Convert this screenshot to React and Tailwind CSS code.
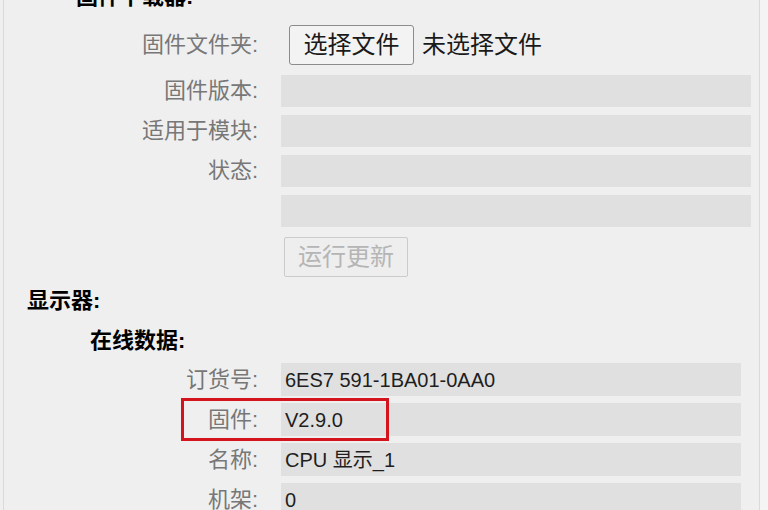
import React from 'react';

const font = { fontFamily: '"Liberation Sans", "Noto Sans CJK SC", sans-serif' };

function Field({ label, children, className = '' }) {
  return (
    <div className={`flex items-center ${className}`}>
      <div className="w-[257px] shrink-0 text-right text-[22px] leading-none text-[#777777]">{label}</div>
      {children}
    </div>
  );
}

function EmptyBox() {
  return <div className="ml-[23px] h-[32px] w-[470px] bg-[#e0e0e0]" />;
}

function ValueBox({ value }) {
  return (
    <div className="ml-[23px] flex h-[33px] w-[460px] items-center bg-[#e0e0e0] pl-[4px] text-[20px] leading-none text-[#1e1e1e]">
      {value}
    </div>
  );
}

export default function App() {
  return (
    <div className="relative h-[510px] w-[768px] overflow-hidden bg-[#efefef]" style={font}>
      <div className="flex h-full">
        <div className="ml-[3px] h-full w-[757px] border-l border-r border-[#dadada]">
          <div className="-ml-[3px]">
            {/* firmware loader */}
            <div className="-mt-[15px] ml-[75px] h-[24px] text-[22px] font-bold leading-[24px] text-black">固件下载器:</div>

            <Field label="固件文件夹:" className="mt-[16px] h-[40px]">
              <button className="ml-[31px] h-[40px] w-[125px] rounded-[3px] border border-[#8c8c8c] bg-[#f3f3f3] text-[24px] leading-none text-[#1a1a1a]">
                选择文件
              </button>
              <span className="ml-[8px] text-[24px] leading-none text-[#1a1a1a]">未选择文件</span>
            </Field>

            <div className="mt-[10px] flex flex-col gap-[8px]">
              <Field label="固件版本:"><EmptyBox /></Field>
              <Field label="适用于模块:"><EmptyBox /></Field>
              <Field label="状态:"><EmptyBox /></Field>
              <Field label=""><EmptyBox /></Field>
            </div>

            <div className="mt-[10px] flex">
              <button
                disabled
                className="ml-[283px] h-[40px] w-[124px] rounded-[2px] border border-[#cbcbcb] bg-[#eeeeee] text-[24px] leading-none text-[#b5b5b5]"
              >
                运行更新
              </button>
            </div>

            {/* display */}
            <div className="mt-[12px] ml-[26px] h-[24px] text-[22px] font-bold leading-[24px] text-black">显示器:</div>
            <div className="mt-[16px] ml-[89px] h-[24px] text-[22px] font-bold leading-[24px] text-black">在线数据:</div>

            <div className="mt-[10px] flex flex-col gap-[7px]">
              <Field label="订货号:"><ValueBox value="6ES7 591-1BA01-0AA0" /></Field>
              <Field label="固件:" className="relative">
                <ValueBox value="V2.9.0" />
                <div className="absolute left-[180px] top-[-5px] h-[43px] w-[208px] border-[3px] border-[#d3141d]" />
              </Field>
              <Field label="名称:"><ValueBox value="CPU 显示_1" /></Field>
              <Field label="机架:"><ValueBox value="0" /></Field>
            </div>
          </div>
        </div>
        <div className="h-full flex-1 bg-[#f4f4f4]" />
      </div>
    </div>
  );
}
